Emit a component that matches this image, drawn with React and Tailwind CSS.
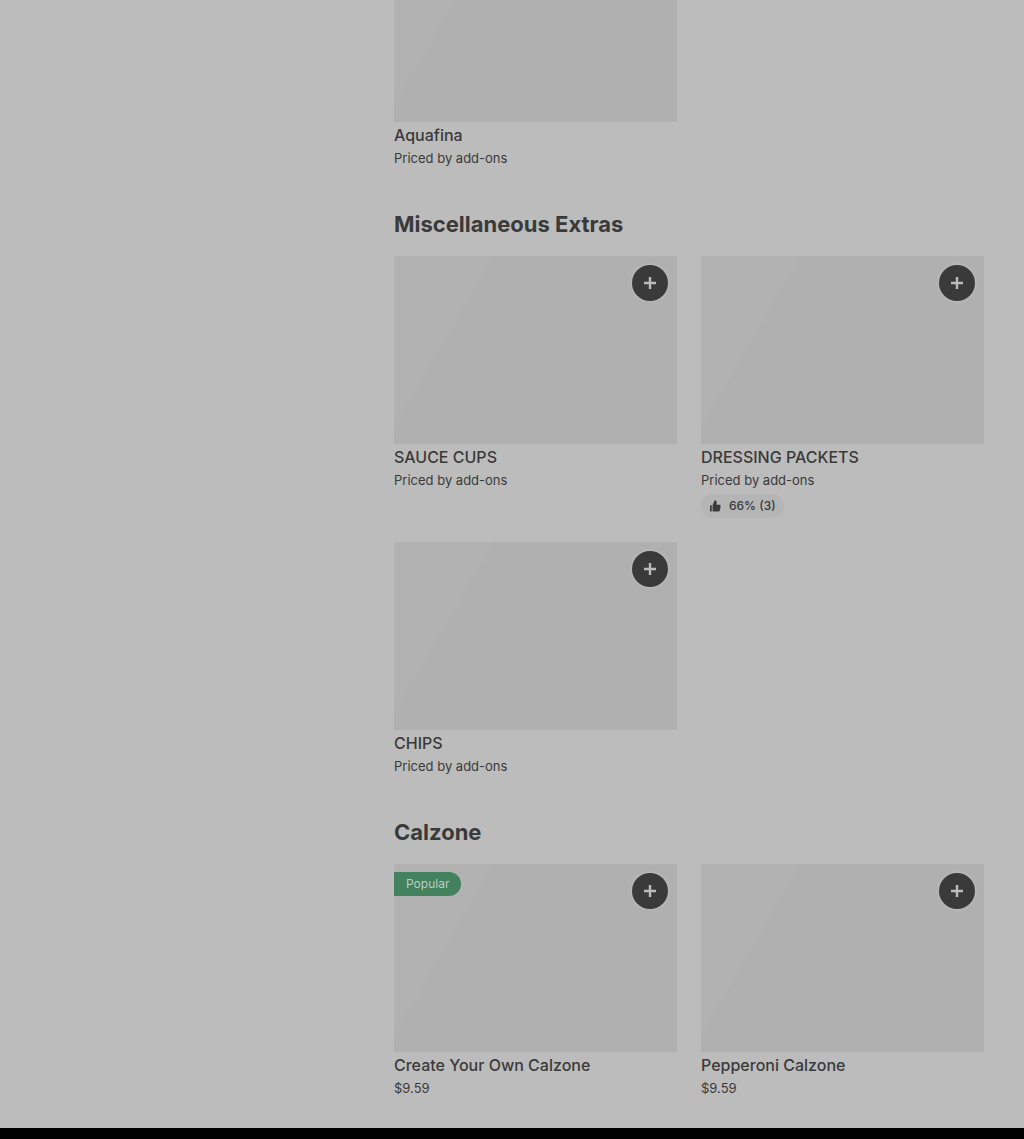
import clsx from "clsx";

const sections = [
  {
    id: "drinks",
    items: [{ name: "Aquafina", price: "Priced by add-ons" }],
  },
  {
    id: "extras",
    title: "Miscellaneous Extras",
    items: [
      { name: "SAUCE CUPS", price: "Priced by add-ons" },
      {
        name: "DRESSING PACKETS",
        price: "Priced by add-ons",
        rating: "66% (3)",
      },
      { name: "CHIPS", price: "Priced by add-ons" },
    ],
  },
  {
    id: "calzone",
    title: "Calzone",
    items: [
      { name: "Create Your Own Calzone", price: "$9.59", popular: true },
      { name: "Pepperoni Calzone", price: "$9.59" },
    ],
  },
];

const PlusIcon = () => (
  <svg width="12" height="12" viewBox="0 0 12 12" aria-hidden="true">
    <path d="M4.8 0h2.4v4.8H12v2.4H7.2V12H4.8V7.2H0V4.8h4.8z" fill="#bcbcbc" />
  </svg>
);

const ThumbIcon = () => (
  <svg width="12" height="12" viewBox="0 0 12 12" aria-hidden="true">
    <path
      d="M1 5.2h1.7v6.3H1zM3.6 5.2 5.5.4h1.2l.9.9v3.5h3.2l.9.9-.9 5-.9.8H3.6z"
      fill="#3a3a3a"
    />
  </svg>
);

const MenuItem = ({ item }) => {
  return (
    <li>
      <div className="relative aspect-[283/188] bg-[linear-gradient(120deg,#b2b2b2_25%,#b0b0b0_26%)]">
        {item.popular && (
          <span className="absolute left-0 top-2 h-6 rounded-r-full bg-[#43815f] px-3 text-xs leading-6 text-[#bcccc3]">
            Popular
          </span>
        )}
        <button
          type="button"
          aria-label={`Add ${item.name}`}
          className="absolute right-[9px] top-[9px] flex size-9 items-center justify-center rounded-full bg-[#3a3a3a] shadow-[0_0_3px_#c8c8c8]"
        >
          <PlusIcon />
        </button>
      </div>
      <h3 className="py-px text-base leading-6 font-medium">{item.name}</h3>
      <p className="text-[13px] leading-5">{item.price}</p>
      {item.rating && (
        <div className="mt-1 flex h-6 w-fit items-center gap-2 rounded-full bg-[#b5b5b5] px-2 text-xs font-medium">
          <ThumbIcon />
          <span>{item.rating}</span>
        </div>
      )}
    </li>
  );
};

const MenuSection = ({ section, first }) => {
  return (
    <section className={clsx(first ? "-mt-[66px]" : "mt-10")}>
      {section.title && (
        <h2 className="mb-4 text-[22px] leading-8 font-bold">
          {section.title}
        </h2>
      )}
      <ul className="grid grid-cols-2 gap-6">
        {section.items.map((item) => (
          <MenuItem key={item.name} item={item} />
        ))}
      </ul>
    </section>
  );
};

const App = () => {
  return (
    <div className="flex min-h-screen flex-col bg-black font-['Inter',sans-serif] text-[#3a3a3a]">
      <div className="flex overflow-hidden bg-[#bcbcbc]">
        <aside className="w-[354px] shrink-0" />
        <main className="flex-1 px-10 pb-[30px]">
          {sections.map((section, index) => (
            <MenuSection
              key={section.id}
              section={section}
              first={index === 0}
            />
          ))}
        </main>
      </div>
    </div>
  );
};

export default App;
